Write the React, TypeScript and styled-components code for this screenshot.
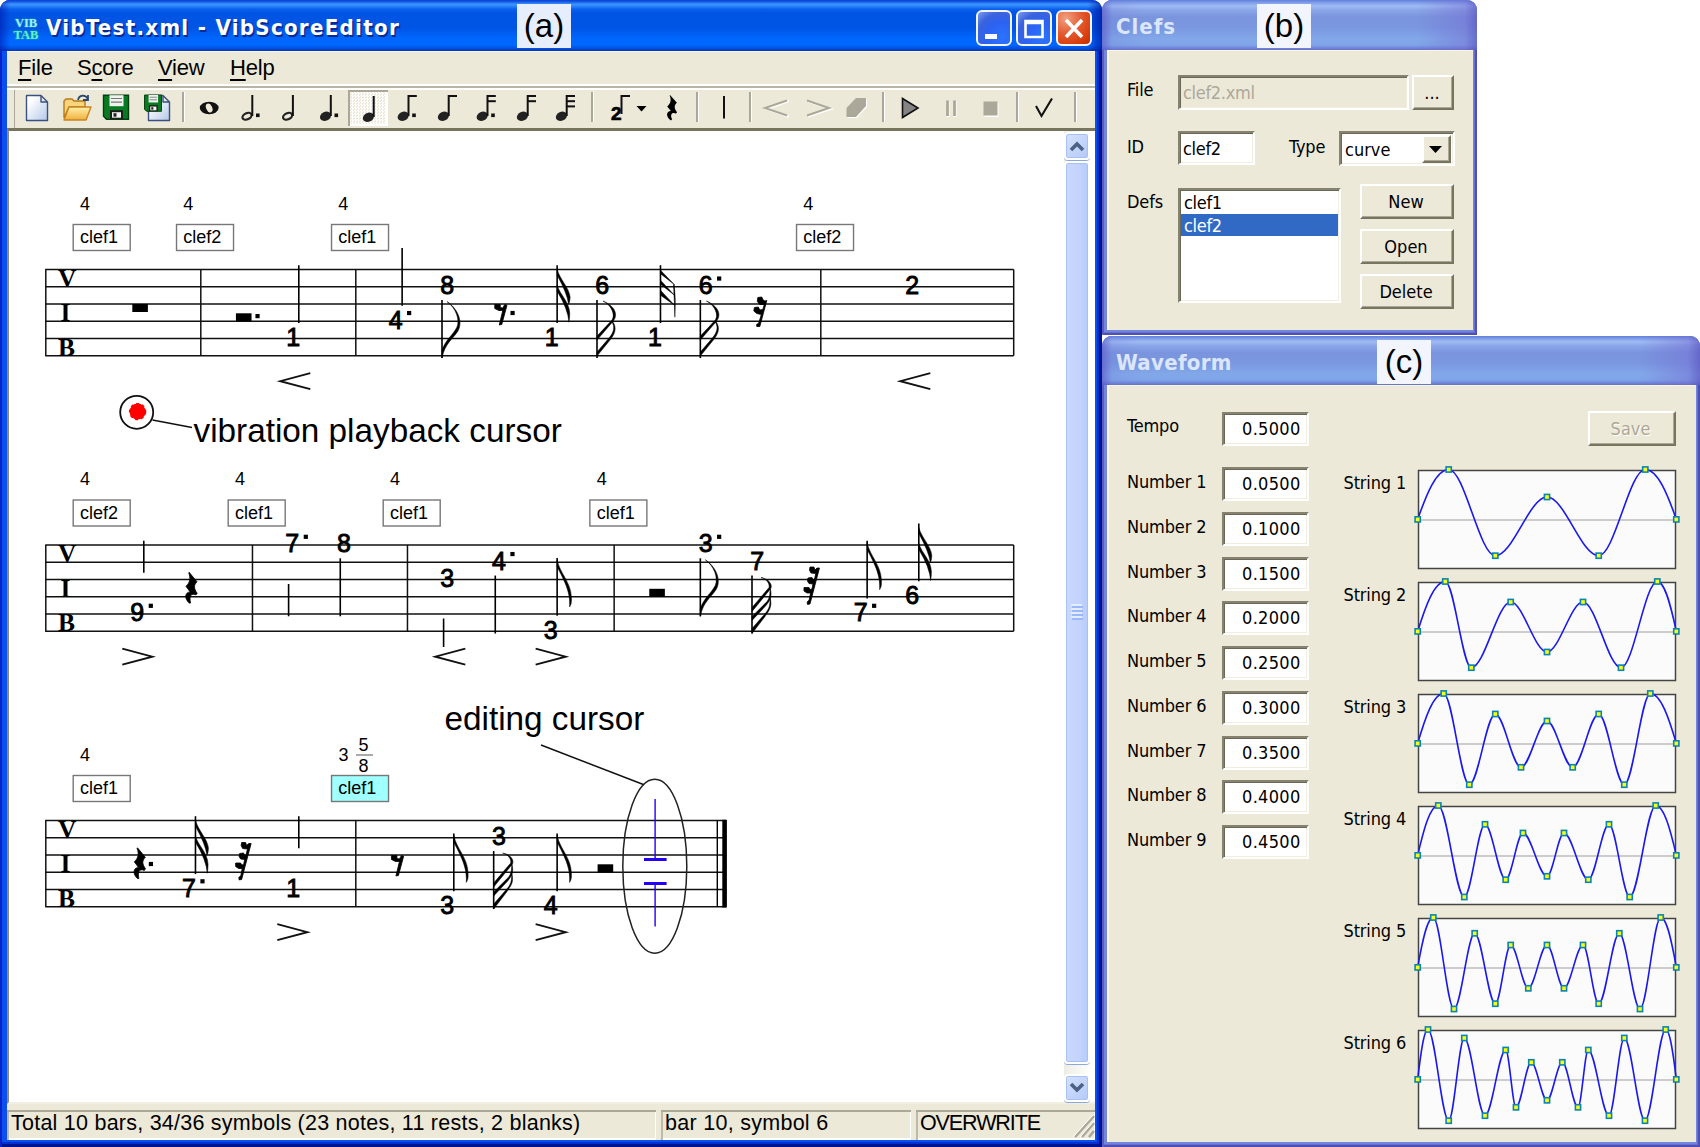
import React from 'react';
import styled, { createGlobalStyle, css } from 'styled-components';

const FACE = '#ece9d8';
const UI = '"DejaVu Sans Condensed", "DejaVu Sans", sans-serif';
const ARIAL = '"Liberation Sans", Arial, sans-serif';

const GlobalStyle = createGlobalStyle`
  * { box-sizing: border-box; }
  body { margin: 0; background: #fff; color: #000; overflow: hidden; }
  svg { display: block; flex: none; }
`;

/* ---------- windows ---------- */

const Desktop = styled.main`
  width: 1700px;
  height: 1147px;
  display: flex;
  align-items: stretch;
  background: #fff;
`;

const SideColumn = styled.div`
  width: 598px;
  display: flex;
  flex-direction: column;
  gap: 1px;
`;

const Window = styled.section<{ $active?: boolean; $w: number; $h: number }>`
  position: relative;
  flex: none;
  width: ${(p) => p.$w}px;
  height: ${(p) => p.$h}px;
  display: flex;
  flex-direction: column;
  border-radius: 10px 10px 0 0;
  overflow: hidden;
  ${(p) =>
    p.$active
      ? css`
          padding: 0 7px 7px 7px;
          background: #0a50ee;
          box-shadow: inset 2px 0 #0a22c8, inset -3px -3px #00138f, inset -5px -5px #0030d0;
        `
      : css`
          padding: 0 4px 5px 5px;
          background: #7286dd;
          box-shadow: inset 2px 0 #5a5cc4, inset -2px -2px #5050b4, inset -3px -3px #6670cf;
        `}
`;

const TitleBar = styled.header<{ $active?: boolean; $h: number }>`
  flex: none;
  height: ${(p) => p.$h}px;
  margin: 0 ${(p) => (p.$active ? '-7px 0 -7px' : '-4px 0 -5px')};
  padding: ${(p) => (p.$active ? '0 10px 0 13px' : '0 10px 0 14px')};
  display: flex;
  align-items: center;
  background: ${(p) =>
    p.$active
      ? 'linear-gradient(90deg, rgba(0,20,170,.55), transparent 10px, transparent calc(100% - 14px), rgba(0,20,150,.7)), linear-gradient(#0a3fd2 0, #1a5fe8 4%, #3c96ff 8%, #2c86f8 12%, #0a5fee 18%, #0054e3 26%, #0055e5 55%, #0066fd 75%, #0068ff 88%, #0050e0 95%, #0034b8 100%)'
      : 'linear-gradient(90deg, rgba(90,90,200,.7), rgba(110,120,215,.2) 10px, transparent 40px, transparent calc(100% - 60px), rgba(116,104,208,.45) calc(100% - 12px), rgba(90,84,190,.7)), linear-gradient(#6180da 0, #84a2ea 6%, #a0bcf3 12%, #8ba6e8 20%, #7a95de 34%, #7a97e0 55%, #82a8e9 78%, #80a4e8 90%, #6b80d8 97%, #6070cc 100%)'};
`;

const TitleText = styled.h1<{ $dim?: boolean; $spacing: number }>`
  margin: 0;
  padding-top: 4px;
  font: 700 22px/30px "DejaVu Sans Condensed", "DejaVu Sans", sans-serif;
  font-stretch: condensed;
  letter-spacing: ${(p) => p.$spacing}px;
  white-space: pre;
  color: ${(p) => (p.$dim ? '#dbe6fb' : '#fff')};
  text-shadow: ${(p) => (p.$dim ? 'none' : '1.5px 1.5px 0 #0a2a90')};
`;

const AppLogo = styled.div`
  width: 26px;
  margin-right: 7px;
  padding-top: 6px;
  display: flex;
  flex-direction: column;
  align-items: center;
  font: 700 12.5px/12px "Liberation Serif", serif;
  color: #a4f0f8;
  text-shadow: 0 0 2px #1a9ac0, 0 0 2px #1a9ac0;
  span + span { color: #5cf4c0; }
`;

const WindowButtons = styled.div`
  margin-left: auto;
  display: flex;
  gap: 4px;
  padding-top: 5px;
`;

const CaptionButton = styled.button<{ $close?: boolean }>`
  width: 36px;
  height: 36px;
  padding: 0;
  display: grid;
  place-items: center;
  border: 2px solid #f2f5ff;
  border-radius: 6px;
  background: ${(p) =>
    p.$close
      ? 'radial-gradient(circle at 25% 20%, #f0a080, #e35a30 45%, #d83a08 80%, #b83010)'
      : 'radial-gradient(circle at 75% 80%, #2a74ff, #2c62f0 45%, #3a63dd 70%, #7d9cf0)'};
`;

const Badge = styled.span<{ $left: number; $tint: string }>`
  position: absolute;
  z-index: 2;
  top: 4px;
  left: ${(p) => p.$left}px;
  width: 54px;
  height: 44px;
  background: ${(p) => p.$tint};
  font: 33px/44px ${ARIAL};
  text-align: center;
`;

/* ---------- main window chrome ---------- */

const MenuBar = styled.nav`
  flex: none;
  height: 39px;
  display: flex;
  padding: 4px 0 0 11px;
  gap: 25px;
  background: ${FACE};
  border-bottom: 2px solid #fff;
  box-shadow: inset 0 -2px #b8b5a4, inset 0 -4px #fff, inset 0 1px #fff8e0;
  font: 22px/25px ${ARIAL};
`;

const MenuItem = styled.span<{ $w: number }>`
  width: ${(p) => p.$w}px;
  white-space: nowrap;
  letter-spacing: -0.2px;
  u { text-underline-offset: 4px; text-decoration-thickness: 1.5px; }
`;

const Toolbar = styled.div`
  flex: none;
  height: 38px;
  display: flex;
  align-items: stretch;
  padding-left: 10px;
  background: ${FACE};
  box-shadow: inset 7px 0 ${FACE}, inset 8px 0 #aca899;
`;

const Tool = styled.span<{ $w?: number; $pressed?: boolean }>`
  flex: none;
  width: ${(p) => p.$w ?? 39.6}px;
  height: 36px;
  ${(p) =>
    p.$pressed &&
    css`
      background: repeating-conic-gradient(#fff 0 25%, #ece9d8 0 50%) 0 0 / 3px 3px;
      box-shadow: inset 2px 2px #aca899, inset -2px -2px #fff;
    `}
`;

const Separator = styled.span`
  flex: none;
  width: 13px;
  height: 30px;
  margin-top: 2px;
  background: linear-gradient(90deg, transparent 5px, #aca899 5px, #aca899 7px, #fff 7px, #fff 8px, transparent 8px);
`;

const Document = styled.div`
  flex: none;
  height: 976px;
  display: flex;
  background: #fff;
  border-top: 3px solid #78755f;
  border-left: 2px solid #8d8a78;
  border-bottom: 2px solid #f1efe2;
  padding-right: 5px;
`;

const ScrollBar = styled.div`
  width: 26px;
  display: flex;
  flex-direction: column;
  padding: 1px 0 0;
  background: linear-gradient(90deg, #eeede5, #fefefb);
`;

const ScrollButton = styled.span`
  height: 28px;
  display: grid;
  place-items: center;
  border: 2px solid #fff;
  border-radius: 4px;
  background: linear-gradient(135deg, #d6e2fe, #b4c9f9);
  box-shadow: inset 0 0 0 1px #a8c0f4, 0 1px #8aa8dc;
`;

const ScrollThumb = styled.span`
  height: 904px;
  margin: 1px 0 10px;
  display: grid;
  place-items: center;
  border: 2px solid #fff;
  border-radius: 4px;
  background: linear-gradient(90deg, #c9d8fd, #c4d3fc 60%, #b5cdfb);
  box-shadow: inset 0 0 0 1px #a8c0f4, 0 1px #8aa8dc;
`;

const StatusBar = styled.footer`
  flex: 1;
  display: flex;
  gap: 5px;
  padding-top: 6px;
  background: ${FACE};
  font: 21.5px/27px ${ARIAL};
`;

const StatusPane = styled.span<{ $w?: number; $spacing?: number }>`
  ${(p) => (p.$w ? `flex: none; width: ${p.$w}px;` : 'flex: 1;')}
  display: flex;
  justify-content: space-between;
  padding-left: 4px;
  letter-spacing: ${(p) => p.$spacing ?? 0}px;
  white-space: nowrap;
  box-shadow: inset 0 2px #aca899, inset 2px 0 #bdbaa9, inset -1px -2px #fff;
`;

/* ---------- dialog controls ---------- */

const Panel = styled.div`
  flex: 1;
  position: relative;
  background: ${FACE};
  border-top: 1px solid #fdf6dd;
  border-left: 2px solid #fdf6dd;
  font: 18px/22px ${UI};
  letter-spacing: -0.15px;
`;

const sunken = css`
  border: 2px solid;
  border-color: #85826f #fff #fff #85826f;
  box-shadow: inset 1px 1px #6b6858, inset -1px -1px #f1eee0;
`;

const ClefForm = styled(Panel)`
  display: flex;
  flex-direction: column;
  padding: 24px 19px 0 18px;
`;

const FormRow = styled.div<{ $gap: number }>`
  display: flex;
  align-items: flex-start;
  margin-bottom: ${(p) => p.$gap}px;
`;

const Label = styled.label<{ $w: number; $top?: number }>`
  flex: none;
  width: ${(p) => p.$w}px;
  padding-top: ${(p) => p.$top ?? 5}px;
  white-space: nowrap;
`;

const Spacer = styled.span<{ $w: number }>`
  flex: none;
  width: ${(p) => p.$w}px;
`;

const Field = styled.span<{ $w: number; $h?: number; $disabled?: boolean; $right?: boolean }>`
  ${sunken}
  flex: none;
  width: ${(p) => p.$w}px;
  height: ${(p) => p.$h ?? 34}px;
  padding: ${(p) => (p.$right ? '4px 6px 0 0' : '5px 0 0 3px')};
  background: ${(p) => (p.$disabled ? FACE : '#fff')};
  color: ${(p) => (p.$disabled ? '#aca899' : '#000')};
  text-align: ${(p) => (p.$right ? 'right' : 'left')};
  letter-spacing: ${(p) => (p.$right ? 0.3 : -0.3)}px;
  white-space: nowrap;
`;

const Combo = styled(Field)`
  display: flex;
  justify-content: space-between;
  padding: 2px 2px 2px 4px;
  line-height: 30px;
  letter-spacing: 0;
`;

const Button = styled.button<{ $w: number; $h?: number; $disabled?: boolean }>`
  flex: none;
  width: ${(p) => p.$w}px;
  height: ${(p) => p.$h ?? 35}px;
  padding: 0 2px 0 0;
  display: grid;
  place-items: center;
  border: 2px solid;
  border-color: #fff #78755f #78755f #fff;
  box-shadow: inset -1px -1px #aca899;
  background: ${FACE};
  font: 18px/22px ${UI};
  color: ${(p) => (p.$disabled ? '#aca899' : '#000')};
  text-shadow: ${(p) => (p.$disabled ? '1px 1px #fff' : 'none')};
`;

const ListBox = styled.div`
  ${sunken}
  width: 163px;
  height: 115px;
  padding: 1px 1px;
  background: #fff;
`;

const ListItem = styled.div<{ $selected?: boolean }>`
  height: 22.5px;
  padding-left: 3px;
  line-height: 23px;
  letter-spacing: -0.3px;
  background: ${(p) => (p.$selected ? '#316ac5' : 'transparent')};
  color: ${(p) => (p.$selected ? '#fff' : '#000')};
`;

const ButtonStack = styled.div`
  display: flex;
  flex-direction: column;
  gap: 10px;
  margin: -4px 0 0 19px;
`;

const WaveForm = styled(Panel)`
  display: flex;
  justify-content: space-between;
  padding: 23px 20.5px 0 18px;
`;

const NumberColumn = styled.div`
  display: flex;
  flex-direction: column;
  padding-top: 3px;
`;

const NumberRow = styled.div<{ $h: number }>`
  display: flex;
  height: ${(p) => p.$h}px;
`;

const ChartColumn = styled.div`
  display: flex;
  flex-direction: column;
  width: 332px;
`;

const SaveRow = styled.div`
  display: flex;
  justify-content: flex-end;
  height: 61.2px;
  padding-top: 2px;
`;

const ChartRow = styled.div`
  display: flex;
  justify-content: space-between;
  height: 111.95px;
`;

const Chart = styled.svg`
  overflow: visible;
`;

/* ---------- score drawing ---------- */

const ScoreCanvas = styled.svg`
  overflow: hidden;
`;
const Small = styled.text`
  font: 18px ${ARIAL};
`;
const Digit = styled.text`
  font: 25px ${ARIAL};
  stroke: #000;
  stroke-width: 0.9px;
`;
const StaffLetter = styled.text`
  font: 700 25.5px "Liberation Serif", serif;
`;
const Note = styled.text`
  font: 33.3px ${ARIAL};
`;

const STEP = 51.667;
const LINE = 17.25;
const colX = (k: number) => 130.3 + STEP * k;

type Len = 'w' | 'h' | 'q' | 'e' | 's' | 't';
type Sym = { k: number; line: number; d: string; len: Len; down?: boolean; dot?: boolean };
type Rest = { k: number; len: Len; dot?: boolean };
type Row = {
  top: number;
  bars: number[];
  clefs: { k: number; name: string; hot?: boolean }[];
  notes: Sym[];
  rests: Rest[];
  hairpins: { k: number; open?: boolean }[];
  end?: boolean;
};

const rows: Row[] = [
  {
    top: 269.5,
    bars: [3, 6, 15],
    clefs: [{ k: 0, name: 'clef1' }, { k: 2, name: 'clef2' }, { k: 5, name: 'clef1' }, { k: 14, name: 'clef2' }],
    notes: [
      { k: 3, line: 4, d: '1', len: 'q' },
      { k: 5, line: 3, d: '4', len: 'q', dot: true },
      { k: 6, line: 1, d: '8', len: 'e', down: true },
      { k: 8, line: 4, d: '1', len: 's' },
      { k: 9, line: 1, d: '6', len: 's', down: true },
      { k: 10, line: 4, d: '1', len: 't' },
      { k: 11, line: 1, d: '6', len: 's', down: true, dot: true },
      { k: 15, line: 1, d: '2', len: 'w' },
    ],
    rests: [
      { k: 0, len: 'w' },
      { k: 2, len: 'h', dot: true },
      { k: 7, len: 'e', dot: true },
      { k: 12, len: 's' },
    ],
    hairpins: [{ k: 3, open: true }, { k: 15, open: true }],
  },
  {
    top: 545,
    bars: [4, 7, 11],
    clefs: [{ k: 0, name: 'clef2' }, { k: 3, name: 'clef1' }, { k: 6, name: 'clef1' }, { k: 10, name: 'clef1' }],
    notes: [
      { k: 0, line: 4, d: '9', len: 'h', dot: true },
      { k: 3, line: 0, d: '7', len: 'h', down: true, dot: true },
      { k: 4, line: 0, d: '8', len: 'q', down: true },
      { k: 6, line: 2, d: '3', len: 'h', down: true },
      { k: 7, line: 1, d: '4', len: 'q', down: true, dot: true },
      { k: 8, line: 5, d: '3', len: 'e' },
      { k: 11, line: 0, d: '3', len: 'e', down: true, dot: true },
      { k: 12, line: 1, d: '7', len: 't', down: true },
      { k: 14, line: 4, d: '7', len: 'e', dot: true },
      { k: 15, line: 3, d: '6', len: 's' },
    ],
    rests: [{ k: 1, len: 'q' }, { k: 10, len: 'h' }, { k: 13, len: 't' }],
    hairpins: [{ k: 0 }, { k: 6, open: true }, { k: 8 }],
  },
  {
    top: 820.5,
    bars: [6],
    clefs: [{ k: 0, name: 'clef1' }, { k: 5, name: 'clef1', hot: true }],
    notes: [
      { k: 1, line: 4, d: '7', len: 's', dot: true },
      { k: 3, line: 4, d: '1', len: 'h' },
      { k: 6, line: 5, d: '3', len: 'e' },
      { k: 7, line: 1, d: '3', len: 't', down: true },
      { k: 8, line: 5, d: '4', len: 'e' },
    ],
    rests: [{ k: 0, len: 'q', dot: true }, { k: 2, len: 't' }, { k: 5, len: 'e' }, { k: 9, len: 'h' }],
    hairpins: [{ k: 3 }, { k: 8 }],
    end: true,
  },
];

/* Flags are drawn from the outer end of the stem, at (0,0). */
const flagUp: Record<string, string> = {
  e: 'M0 2 C3 16 14 24 14.3 40 C14.5 46 13.5 47 12.5 49 C13 38 11 29 0 9 Z',
  s: 'M0 4 C3 15 12 22 13 32 Q12.8 37 11.5 39 Q10 28 0 10 Z M0 20 C3 30 12 36 12.6 48 Q12.6 53 11.8 57 Q11 44 0 26 Z',
  t: 'M0 5 L14 19.5 L0 8.5 Z M0 15 L14 30 L0 19 Z M0 25 L14 40 L0 30 Z M13.8 19.5 Q15.5 34 14.4 52 Q14 36 13 19.5 Z',
};
const flagDown: Record<string, string> = {
  e: 'M5 -56.5 C15 -50 21.5 -37 16 -27 C11 -19 3 -15 0 0 L0 -8 C4 -19 11 -23 15 -31 C18 -38 14 -50 5 -56.5 Z',
  s: 'M6 -57 C18 -52 22 -43 15.5 -36 L0 -18 L0 -22 L15 -38 C19 -44 13 -54 6 -57 Z M16 -36 C20 -30 18 -24 13 -18 L0 -2 L0 -6 L12 -20 C17 -26 18 -31 15 -36 Z',
  t: 'M9 -56 C19 -54 21 -47 18 -44 L0 -22 L0 -26 L17 -46 C18 -50 14 -55 9 -56 Z M18 -46 C21 -36 17 -32 14 -28 L0 -13 L0 -17 L15 -32 C18 -36 18 -40 18 -46 Z M18 -36 C21 -26 16 -22 13 -17 L0 0 L0 -5 L14 -21 C18 -26 18 -30 18 -36 Z',
};

const TabNote = ({ n, top }: { n: Sym; top: number }) => {
  const x = colX(n.k);
  const y = top + n.line * LINE;
  const flagged = n.len === 'e' || n.len === 's' || n.len === 't';
  const sx = n.down ? x + (flagged ? 1.7 : 3.3) : x + 13.5;
  const far = n.down ? y + (n.len === 'h' && n.line === 2 ? 67.5 : 71.3) : y - 73.3;
  const near = n.down ? y + (n.len === 'h' ? 39 : 13.3) : y - (n.len === 'h' ? 41.3 : 15.4);
  return (
    <g>
      <Digit x={n.d === '1' ? x + 1 : x} y={y + 7.4}>{n.d}</Digit>
      {n.dot && <rect x={x + 18.4} y={y - 10.3} width="4.2" height="4.2" />}
      {n.len !== 'w' && <line x1={sx} x2={sx} y1={near} y2={far} stroke="#000" strokeWidth="1.6" />}
      {flagged && (
        <path
          d={(n.down ? flagDown : flagUp)[n.len]}
          transform={`translate(${sx} ${far})`}
          stroke="#000"
          strokeWidth="0.5"
        />
      )}
    </g>
  );
};

const TabRest = ({ r, top }: { r: Rest; top: number }) => {
  const x = colX(r.k);
  let mark: React.ReactNode = null;
  let dotX = 18.5;
  let dotY = 41.4;
  if (r.len === 'w') mark = <rect x={x + 2} y={top + 34.5} width="15.6" height="8" />;
  if (r.len === 'h') {
    mark = <rect x={x + 2.3} y={top + 43.8} width="15.6" height="8" />;
    dotX = 21.8;
    dotY = 44.5;
  }
  if (r.len === 'q')
    mark = (
      <path
        transform={`translate(${x + 3.2} ${top + 27.3})`}
        d="M4 0 L11.8 9.5 C8.5 13 8.5 16 12 21 L10.8 22.6 C6 20.5 3.8 24 5.4 30.6 L4.4 31 C-1 26.5 -.6 20 5 19.6 L.8 14 C5 10 5.6 6 3.6 .6 Z"
      />
    );
  if (r.len === 'e')
    mark = (
      <path
        transform={`translate(${x + 2.8} ${top + 34})`}
        d="M0 1 H5.5 V4 L8 4.5 L10 1 L12.2 1.8 L7 21 L4.5 21.5 L8 7 L4 7 L0 5 Z"
      />
    );
  if (r.len === 's')
    mark = (
      <path
        transform={`translate(${x + 3.5} ${top + 27})`}
        d="M4 1 L8 .5 L9 3 L11 4.5 L13 4 L6 30 L3 30 L2.8 28 L5 26.5 L7.5 18 L3 17 L0 14.5 L.6 11 L4.5 10.5 L6 13.5 L9 13 L10.5 8 L6 8 L3.5 5 Z"
      />
    );
  if (r.len === 't')
    mark = (
      <path
        transform={`translate(${x + 2} ${top + 21})`}
        d="M6 1 H10 L11 4 L13 2 L15.5 2 L6 38 L3.5 38.4 L3.2 36 L5.2 34 L6.6 27 L3 27 L0 25 V21.5 H5 L6 23.5 L8 23 L9 18 L5 17.5 L3.5 15 L4 12 L8 11.5 L9 14 L10.6 13 L11.8 7.5 L7 7 L5.5 4 Z"
      />
    );
  const blocky = r.len === 'w' || r.len === 'h';
  return (
    <g>
      <g stroke="#000" strokeWidth={blocky ? 0 : 0.8}>{mark}</g>
      {r.dot && <rect x={x + dotX} y={top + dotY} width="4.2" height="4.2" />}
    </g>
  );
};

const Staff = ({ row }: { row: Row }) => {
  const { top } = row;
  const right = row.end ? 726 : 1013.7;
  const bottom = top + 5 * LINE;
  return (
    <g>
      <g stroke="#111" strokeWidth="1.5">
        {[0, 1, 2, 3, 4, 5].map((i) => (
          <line key={i} x1="45.2" x2={right} y1={top + i * LINE} y2={top + i * LINE} />
        ))}
        {[0, ...row.bars].map((b) => (
          <line key={b} x1={45.8 + b * STEP} x2={45.8 + b * STEP} y1={top} y2={bottom} />
        ))}
        {!row.end && <line x1={right} x2={right} y1={top} y2={bottom} />}
      </g>
      {row.end && (
        <g>
          <rect x="716.6" y={top} width="1.4" height={bottom - top} />
          <rect x="722.3" y={top - 0.7} width="4.6" height={bottom - top + 1.4} />
        </g>
      )}
      <StaffLetter x="58" y={top + 17.3}>V</StaffLetter>
      <StaffLetter x="60.5" y={top + 51.7}>I</StaffLetter>
      <StaffLetter x="58" y={top + 86}>B</StaffLetter>
      {row.clefs.map((c) => {
        const x = 73.2 + c.k * STEP;
        return (
          <g key={c.k}>
            {c.hot ? (
              <g>
                <Small x={x + 7} y={top - 59.5}>3</Small>
                <Small x={x + 27} y={top - 69.5}>5</Small>
                <line x1={x + 24.5} x2={x + 41.5} y1={top - 65.5} y2={top - 65.5} stroke="#555" />
                <Small x={x + 27} y={top - 49}>8</Small>
              </g>
            ) : (
              <Small x={x + 6.8} y={top - 59.8}>4</Small>
            )}
            <rect x={x} y={top - 45} width="57" height="26" fill={c.hot ? '#a0ffff' : '#fff'} stroke="#777" strokeWidth="1.4" />
            <Small x={x + 6.8} y={top - 26.5}>{c.name}</Small>
          </g>
        );
      })}
      {row.notes.map((n) => <TabNote key={n.k} n={n} top={top} />)}
      {row.rests.map((r) => <TabRest key={r.k} r={r} top={top} />)}
      {row.hairpins.map((h) => {
        const x = colX(h.k);
        const y = top + 111.7;
        return (
          <polyline
            key={h.k}
            fill="none"
            stroke="#111"
            strokeWidth="1.9"
            points={
              h.open
                ? `${x + 25},${y - 8} ${x - 5},${y} ${x + 25},${y + 8}`
                : `${x - 8},${y - 8} ${x + 22},${y} ${x - 8},${y + 8}`
            }
          />
        );
      })}
    </g>
  );
};

const Score = () => (
  <ScoreCanvas width="1055" height="971" viewBox="9 131 1055 971">
    {rows.map((r) => <Staff key={r.top} row={r} />)}
    <circle cx="136.7" cy="412.3" r="16.5" fill="none" stroke="#111" strokeWidth="1.8" />
    <circle cx="137.6" cy="411.6" r="8" fill="red" stroke="red" strokeWidth="1.4" strokeDasharray="3 3" />
    <line x1="152.5" y1="420" x2="192" y2="427.5" stroke="#111" strokeWidth="1.5" />
    <Note x="193.5" y="441.8">vibration playback cursor</Note>
    <Note x="444.5" y="729.7">editing cursor</Note>
    <line x1="541" y1="745" x2="644" y2="784.8" stroke="#111" strokeWidth="1.5" />
    <ellipse cx="654.8" cy="866.3" rx="32" ry="87" fill="none" stroke="#222" strokeWidth="1.5" />
    <g fill="#2400f8">
      <rect x="654.4" y="799" width="1.4" height="60" />
      <rect x="644" y="858" width="22.6" height="3" />
      <rect x="644" y="882" width="22.6" height="3" />
      <rect x="654.4" y="885" width="1.4" height="41.5" />
    </g>
  </ScoreCanvas>
);

/* ---------- toolbar icons ---------- */

const Icon = ({ w = 40, children }: { w?: number; children: React.ReactNode }) => (
  <svg width={w} height="36" viewBox={`0 0 ${w} 36`}>{children}</svg>
);

const TupletDigit = styled.text`
  font: 700 19px ${ARIAL};
  stroke: #000;
  stroke-width: 0.7px;
`;

const NoteIcon = ({ flags = 0, open, dot, x = 16.5, y = 0 }: { flags?: number; open?: boolean; dot?: boolean; x?: number; y?: number }) => (
  <Icon>
    <g transform={`translate(0 ${y})`}>
      <ellipse
        cx={x} cy="26.3" rx={open ? 4.8 : 5.8} ry={open ? 3.1 : 4.4}
        transform={`rotate(-25 ${x} 26.3)`}
        fill={open ? 'none' : '#222'} stroke="#222" strokeWidth={open ? 2.2 : 0}
      />
      <rect x={x + 4.3} y="5" width="2" height="21" fill="#111" />
      {Array.from({ length: flags }, (_, i) => (
        <rect key={i} x={x + 5} y={5 + i * 5.2} width="8.6" height="2" fill="#111" />
      ))}
      {dot && <rect x={x + 9} y="23.5" width="3.6" height="3.6" fill="#111" />}
    </g>
  </Icon>
);

const Floppy = ({ s }: { s: number }) => (
  <g transform={`scale(${s})`}>
    <path d="M0 0 H25 V24 H3 L0 21 Z" fill="#0a7a22" stroke="#024010" strokeWidth="1.4" />
    <rect x="6" y="0" width="14" height="11" fill="#eef3ee" />
    <path d="M7.5 3.3 H18.5 M7.5 7 H18.5" stroke="#777" strokeWidth="1.2" />
    <rect x="6.5" y="15" width="13" height="9" fill="#1a1f1a" />
    <rect x="8.5" y="17" width="9" height="5.5" fill="#f4f4f4" />
    <rect x="10" y="18" width="3" height="3.5" fill="#222" />
  </g>
);

const Sheet = () => (
  <path d="M0 0 H14.5 L21 6.5 V25 H0 Z M14.5 0 V6.5 H21" fill="url(#sheet)" stroke="#3a5080" strokeWidth="1.4" strokeLinejoin="round" />
);

const MainToolbar = () => (
  <Toolbar>
    <Tool $w={40}>
      <Icon>
        <defs>
          <linearGradient id="sheet" x1="0" y1="0" x2="1" y2="1">
            <stop offset="0.2" stopColor="#fff" />
            <stop offset="1" stopColor="#b4c8e8" />
          </linearGradient>
          <linearGradient id="folder" x1="0" y1="0" x2="0" y2="1">
            <stop offset="0" stopColor="#fff0a8" />
            <stop offset="1" stopColor="#f0b03c" />
          </linearGradient>
        </defs>
        <g transform="translate(9.5 5.5)"><Sheet /></g>
      </Icon>
    </Tool>
    <Tool $w={40}>
      <Icon>
        <path d="M7 28 V11 L9 9 H15 L17 11 H28 V17 H12 Z" fill="#f8d47c" stroke="#b87818" strokeWidth="1.4" />
        <path d="M7 30 L12 17 H34 L29 30 Z" fill="url(#folder)" stroke="#c88420" strokeWidth="1.4" strokeLinejoin="round" />
        <path d="M21 10 C22 5 28 4 31 9 M31 5 V10 H26" fill="none" stroke="#2a4870" strokeWidth="1.8" />
      </Icon>
    </Tool>
    <Tool $w={40}>
      <Icon><g transform="translate(6.5 5.2)"><Floppy s={1} /></g></Icon>
    </Tool>
    <Tool $w={40}>
      <Icon>
        <g transform="translate(11.5 5.5)"><Sheet /></g>
        <g transform="translate(7.5 5)"><Floppy s={0.68} /></g>
      </Icon>
    </Tool>
    <Separator />
    <Tool>
      <Icon>
        <ellipse cx="19.2" cy="18" rx="9.4" ry="6.2" fill="#111" />
        <ellipse cx="19.2" cy="18" rx="3" ry="4.6" transform="rotate(-25 19.2 18)" fill={FACE} />
      </Icon>
    </Tool>
    <Tool><NoteIcon open dot x={17} /></Tool>
    <Tool><NoteIcon open x={18.6} /></Tool>
    <Tool><NoteIcon dot /></Tool>
    <Tool $pressed><NoteIcon x={20.4} y={1} /></Tool>
    <Tool><NoteIcon flags={1} dot x={15.2} /></Tool>
    <Tool><NoteIcon flags={1} x={15.4} /></Tool>
    <Tool><NoteIcon flags={2} dot x={15.2} /></Tool>
    <Tool><NoteIcon flags={2} x={15.4} /></Tool>
    <Tool><NoteIcon flags={3} x={15.4} /></Tool>
    <Separator />
    <Tool $w={52}>
      <Icon w={52}>
        <TupletDigit x="12" y="30">2</TupletDigit>
        <path d="M22.5 24 V6 H31" fill="none" stroke="#111" strokeWidth="2" />
        <path d="M37.5 16 H47.5 L42.5 21.5 Z" />
      </Icon>
    </Tool>
    <Tool>
      <Icon>
        <path transform="translate(15.5 5) scale(.88 .82)" d="M4 0 L11.8 9.5 C8.5 13 8.5 16 12 21 L10.8 22.6 C6 20.5 3.8 24 6.4 29.6 L5 31 C-1 26.5 -.6 20 5 19.6 L.8 14 C5 10 5.6 6 3.6 .6 Z" />
      </Icon>
    </Tool>
    <Separator />
    <Tool $w={40.5}><Icon><rect x="19" y="6" width="2" height="22.5" fill="#111" /></Icon></Tool>
    <Separator />
    <Tool $w={40.5}>
      <Icon>
        <g fill="none" strokeWidth="2">
          <path d="M31 12 L9 20 L31 28" transform="translate(1 -1)" stroke="#fff" />
          <path d="M30 10.5 L8 18 L30 25.5" stroke="#aca899" />
        </g>
      </Icon>
    </Tool>
    <Tool $w={40.5}>
      <Icon>
        <g fill="none" strokeWidth="2">
          <path d="M10 11.5 L33 19 L10 26.5" stroke="#fff" />
          <path d="M9 10.5 L31 18 L9 25.5" stroke="#aca899" />
        </g>
      </Icon>
    </Tool>
    <Tool $w={39}>
      <Icon w={39}>
        <path d="M9.5 19 L19 9 H29 V17 L19 28 H9.5 Z" fill="#fff" />
        <path d="M8.5 18 L18 8 H28 V16 L18 27 H8.5 Z" fill="#aca899" />
      </Icon>
    </Tool>
    <Separator />
    <Tool $w={40.5}>
      <Icon><path d="M12.5 8.5 L28 18 L12.5 27.5 Z" fill="#848484" stroke="#111" strokeWidth="1.6" /></Icon>
    </Tool>
    <Tool $w={40}>
      <Icon>
        <path d="M17 11 V27 M24 11 V27" stroke="#fff" strokeWidth="3" />
        <path d="M16.5 10.5 V26 M23.5 10.5 V26" stroke="#aca899" strokeWidth="2.8" />
      </Icon>
    </Tool>
    <Tool $w={40}>
      <Icon>
        <rect x="13.5" y="13" width="14" height="14" fill="#fff" />
        <rect x="12.5" y="11.5" width="14" height="14" fill="#aca899" />
      </Icon>
    </Tool>
    <Separator />
    <Tool $w={45}>
      <Icon><path d="M12 16 L17.5 26 L28 8.5" fill="none" stroke="#111" strokeWidth="2.1" /></Icon>
    </Tool>
    <Separator />
  </Toolbar>
);

/* ---------- waveform charts ---------- */

type Pt = [number, number];
const wave = (mid: Pt[]): Pt[] => [[-0.3, 49.4], ...mid, [258.3, 49.4]];

const strings: Pt[][] = [
  wave([[30.7, -0.5], [77.3, 85.7], [129, 27], [180.7, 85.7], [227.3, -0.5]]),
  wave([[27.3, -0.5], [53.3, 85.7], [92.7, 20], [129, 70], [165, 20], [203, 85.7], [239.3, -0.5]]),
  wave([[25.7, -0.5], [51.3, 90.7], [77.3, 20], [103, 73.3], [129, 27], [154.7, 73.3], [180.7, 20], [206.3, 90.7], [232.3, -0.5]]),
  wave([[20.3, -0.5], [46.3, 91], [67, 18.3], [87.7, 73.7], [105, 27], [129, 70.3], [146, 27], [170.3, 73.7], [191, 18.3], [211.7, 91], [237.7, -0.5]]),
  wave([[15.3, -0.5], [36, 91], [56.7, 15.3], [77.3, 85.7], [92.7, 27], [110.3, 70.3], [129, 27], [146, 70.3], [165, 27], [180.7, 85.7], [201.3, 15.3], [222, 91], [242.7, -0.5]]),
  wave([[10, -0.5], [30.7, 90.7], [46.3, 8], [67, 85.7], [87.7, 20], [98, 77.3], [113.3, 32.3], [129, 70.3], [144.3, 32.3], [160, 77.3], [170.3, 20], [191, 85.7], [206.3, 8], [227, 90.7], [247.7, -0.5]]),
];

const curve = (pts: Pt[]) =>
  pts.slice(1).reduce((d, [x, y], i) => {
    const [px, py] = pts[i];
    const dx = x - px;
    const dy = y - py;
    const first = i === 0;
    const last = i === pts.length - 2;
    const c1 = first ? [px + dx * 0.28, py + dy * 0.5] : [px + dx * (last ? 0.4 : 0.34), py];
    const c2 = last ? [x - dx * 0.28, y - dy * 0.5] : [x - dx * (first ? 0.4 : 0.34), y];
    return `${d} C${c1[0]} ${c1[1]} ${c2[0]} ${c2[1]} ${x} ${y}`;
  }, `M${pts[0][0]} ${pts[0][1]}`);

const WaveChart = ({ pts }: { pts: Pt[] }) => (
  <Chart width="258" height="99">
    <rect x="0.5" y="0.5" width="257" height="98" fill="#fbfbfb" stroke="#444" strokeWidth="1.5" />
    <line x1="1" x2="257" y1="49.9" y2="49.9" stroke="#bdbdbd" strokeWidth="1.5" />
    <path d={curve(pts)} fill="none" stroke="#1a18f0" strokeWidth="1.6" />
    {pts.map(([x, y]) => (
      <rect key={x} x={x - 2.6} y={y - 2.6} width="5.2" height="5.2" fill="#ff0" stroke="#0a84b4" strokeWidth="1.6" />
    ))}
  </Chart>
);

/* ---------- application ---------- */

const menus: [string, string, string, number][] = [
  ['', 'F', 'ile', 34],
  ['S', 'c', 'ore', 56],
  ['', 'V', 'iew', 47],
  ['', 'H', 'elp', 44],
];

const numbers = ['0.0500', '0.1000', '0.1500', '0.2000', '0.2500', '0.3000', '0.3500', '0.4000', '0.4500'];

export default function App() {
  return (
    <Desktop>
      <GlobalStyle />
      <Window $active $w={1102} $h={1147}>
        <TitleBar $active $h={51}>
          <AppLogo><span>VIB</span><span>TAB</span></AppLogo>
          <TitleText $spacing={1.33}>VibTest.xml - VibScoreEditor</TitleText>
          <WindowButtons>
            <CaptionButton aria-label="Minimize">
              <svg width="28" height="28"><rect x="5" y="20" width="12" height="5" fill="#fff" /></svg>
            </CaptionButton>
            <CaptionButton aria-label="Maximize">
              <svg width="28" height="28"><path d="M5.5 7 H22.5 V23 H5.5 Z M5.5 9 H22.5" fill="none" stroke="#fff" strokeWidth="2.6" /></svg>
            </CaptionButton>
            <CaptionButton $close aria-label="Close">
              <svg width="28" height="28"><path d="M6 6 L22 23 M22 6 L6 23" stroke="#fff" strokeWidth="3.6" /></svg>
            </CaptionButton>
          </WindowButtons>
        </TitleBar>
        <Badge $left={517} $tint="#e6eefd">(a)</Badge>
        <MenuBar>
          {menus.map(([a, u, b, w]) => (
            <MenuItem key={u} $w={w}>{a}<u>{u}</u>{b}</MenuItem>
          ))}
        </MenuBar>
        <MainToolbar />
        <Document>
          <Score />
          <ScrollBar>
            <ScrollButton>
              <svg width="16" height="12"><path d="M2 10 L8 4 L14 10" fill="none" stroke="#4d6185" strokeWidth="3.6" /></svg>
            </ScrollButton>
            <ScrollThumb>
              <svg width="12" height="16">
                <path d="M0 1 H11 M0 5 H11 M0 9 H11 M0 13 H11" stroke="#eef4fe" strokeWidth="1.6" />
                <path d="M1 3 H12 M1 7 H12 M1 11 H12 M1 15 H12" stroke="#8cb0f8" strokeWidth="1.6" />
              </svg>
            </ScrollThumb>
            <ScrollButton>
              <svg width="16" height="12"><path d="M2 2 L8 8 L14 2" fill="none" stroke="#4d6185" strokeWidth="3.6" /></svg>
            </ScrollButton>
          </ScrollBar>
        </Document>
        <StatusBar>
          <StatusPane $w={649} $spacing={0.24}>Total 10 bars, 34/36 symbols (23 notes, 11 rests, 2 blanks)</StatusPane>
          <StatusPane $w={250} $spacing={0.28}>bar 10, symbol 6</StatusPane>
          <StatusPane $spacing={-1.1}>
            OVERWRITE
            <svg width="22" height="28">
              <path d="M2 27 L21 6 M9 27 L21 13 M16 27 L21 21" stroke="#aca899" strokeWidth="2.6" />
              <path d="M0 27 L20 5 M7 27 L21 11" stroke="#fff" strokeWidth="1" />
            </svg>
          </StatusPane>
        </StatusBar>
      </Window>

      <SideColumn>
        <Window $w={375} $h={335}>
          <TitleBar $h={50}><TitleText $dim $spacing={1}>Clefs</TitleText></TitleBar>
          <Badge $left={155} $tint="#f2f5fe">(b)</Badge>
          <ClefForm>
            <FormRow $gap={21}>
              <Label $w={51} $top={4}>File</Label>
              <Field $w={231} $h={35} $disabled>clef2.xml</Field>
              <Spacer $w={3} />
              <Button $w={42}>...</Button>
            </FormRow>
            <FormRow $gap={22}>
              <Label $w={51}>ID</Label>
              <Field $w={77} $h={34}>clef2</Field>
              <Spacer $w={34} />
              <Label $w={50}>Type</Label>
              <Combo $w={116} $h={35}>
                curve
                <Button $w={29} $h={28} aria-label="Show types">
                  <svg width="13" height="8"><path d="M0 1 H13 L6.5 8 Z" /></svg>
                </Button>
              </Combo>
            </FormRow>
            <FormRow $gap={0}>
              <Label $w={51} $top={3}>Defs</Label>
              <ListBox>
                <ListItem>clef1</ListItem>
                <ListItem $selected>clef2</ListItem>
              </ListBox>
              <ButtonStack>
                <Button $w={94}>New</Button>
                <Button $w={94}>Open</Button>
                <Button $w={94}>Delete</Button>
              </ButtonStack>
            </FormRow>
          </ClefForm>
        </Window>

        <Window $w={598} $h={811}>
          <TitleBar $h={49}><TitleText $dim $spacing={0.3}>Waveform</TitleText></TitleBar>
          <Badge $left={275} $tint="#f2f5fe">(c)</Badge>
          <WaveForm>
            <NumberColumn>
              <NumberRow $h={55}>
                <Label $w={94.5} $top={3}>Tempo</Label>
                <Field $w={87} $h={34} $right>0.5000</Field>
              </NumberRow>
              {numbers.map((v, i) => (
                <NumberRow key={v} $h={44.77}>
                  <Label $w={94.5} $top={4}>Number {i + 1}</Label>
                  <Field $w={87} $h={34} $right>{v}</Field>
                </NumberRow>
              ))}
            </NumberColumn>
            <ChartColumn>
              <SaveRow><Button $w={88} $disabled>Save</Button></SaveRow>
              {strings.map((pts, i) => (
                <ChartRow key={i}>
                  <Label $w={70} $top={2}>String {i + 1}</Label>
                  <WaveChart pts={pts} />
                </ChartRow>
              ))}
            </ChartColumn>
          </WaveForm>
        </Window>
      </SideColumn>
    </Desktop>
  );
}
